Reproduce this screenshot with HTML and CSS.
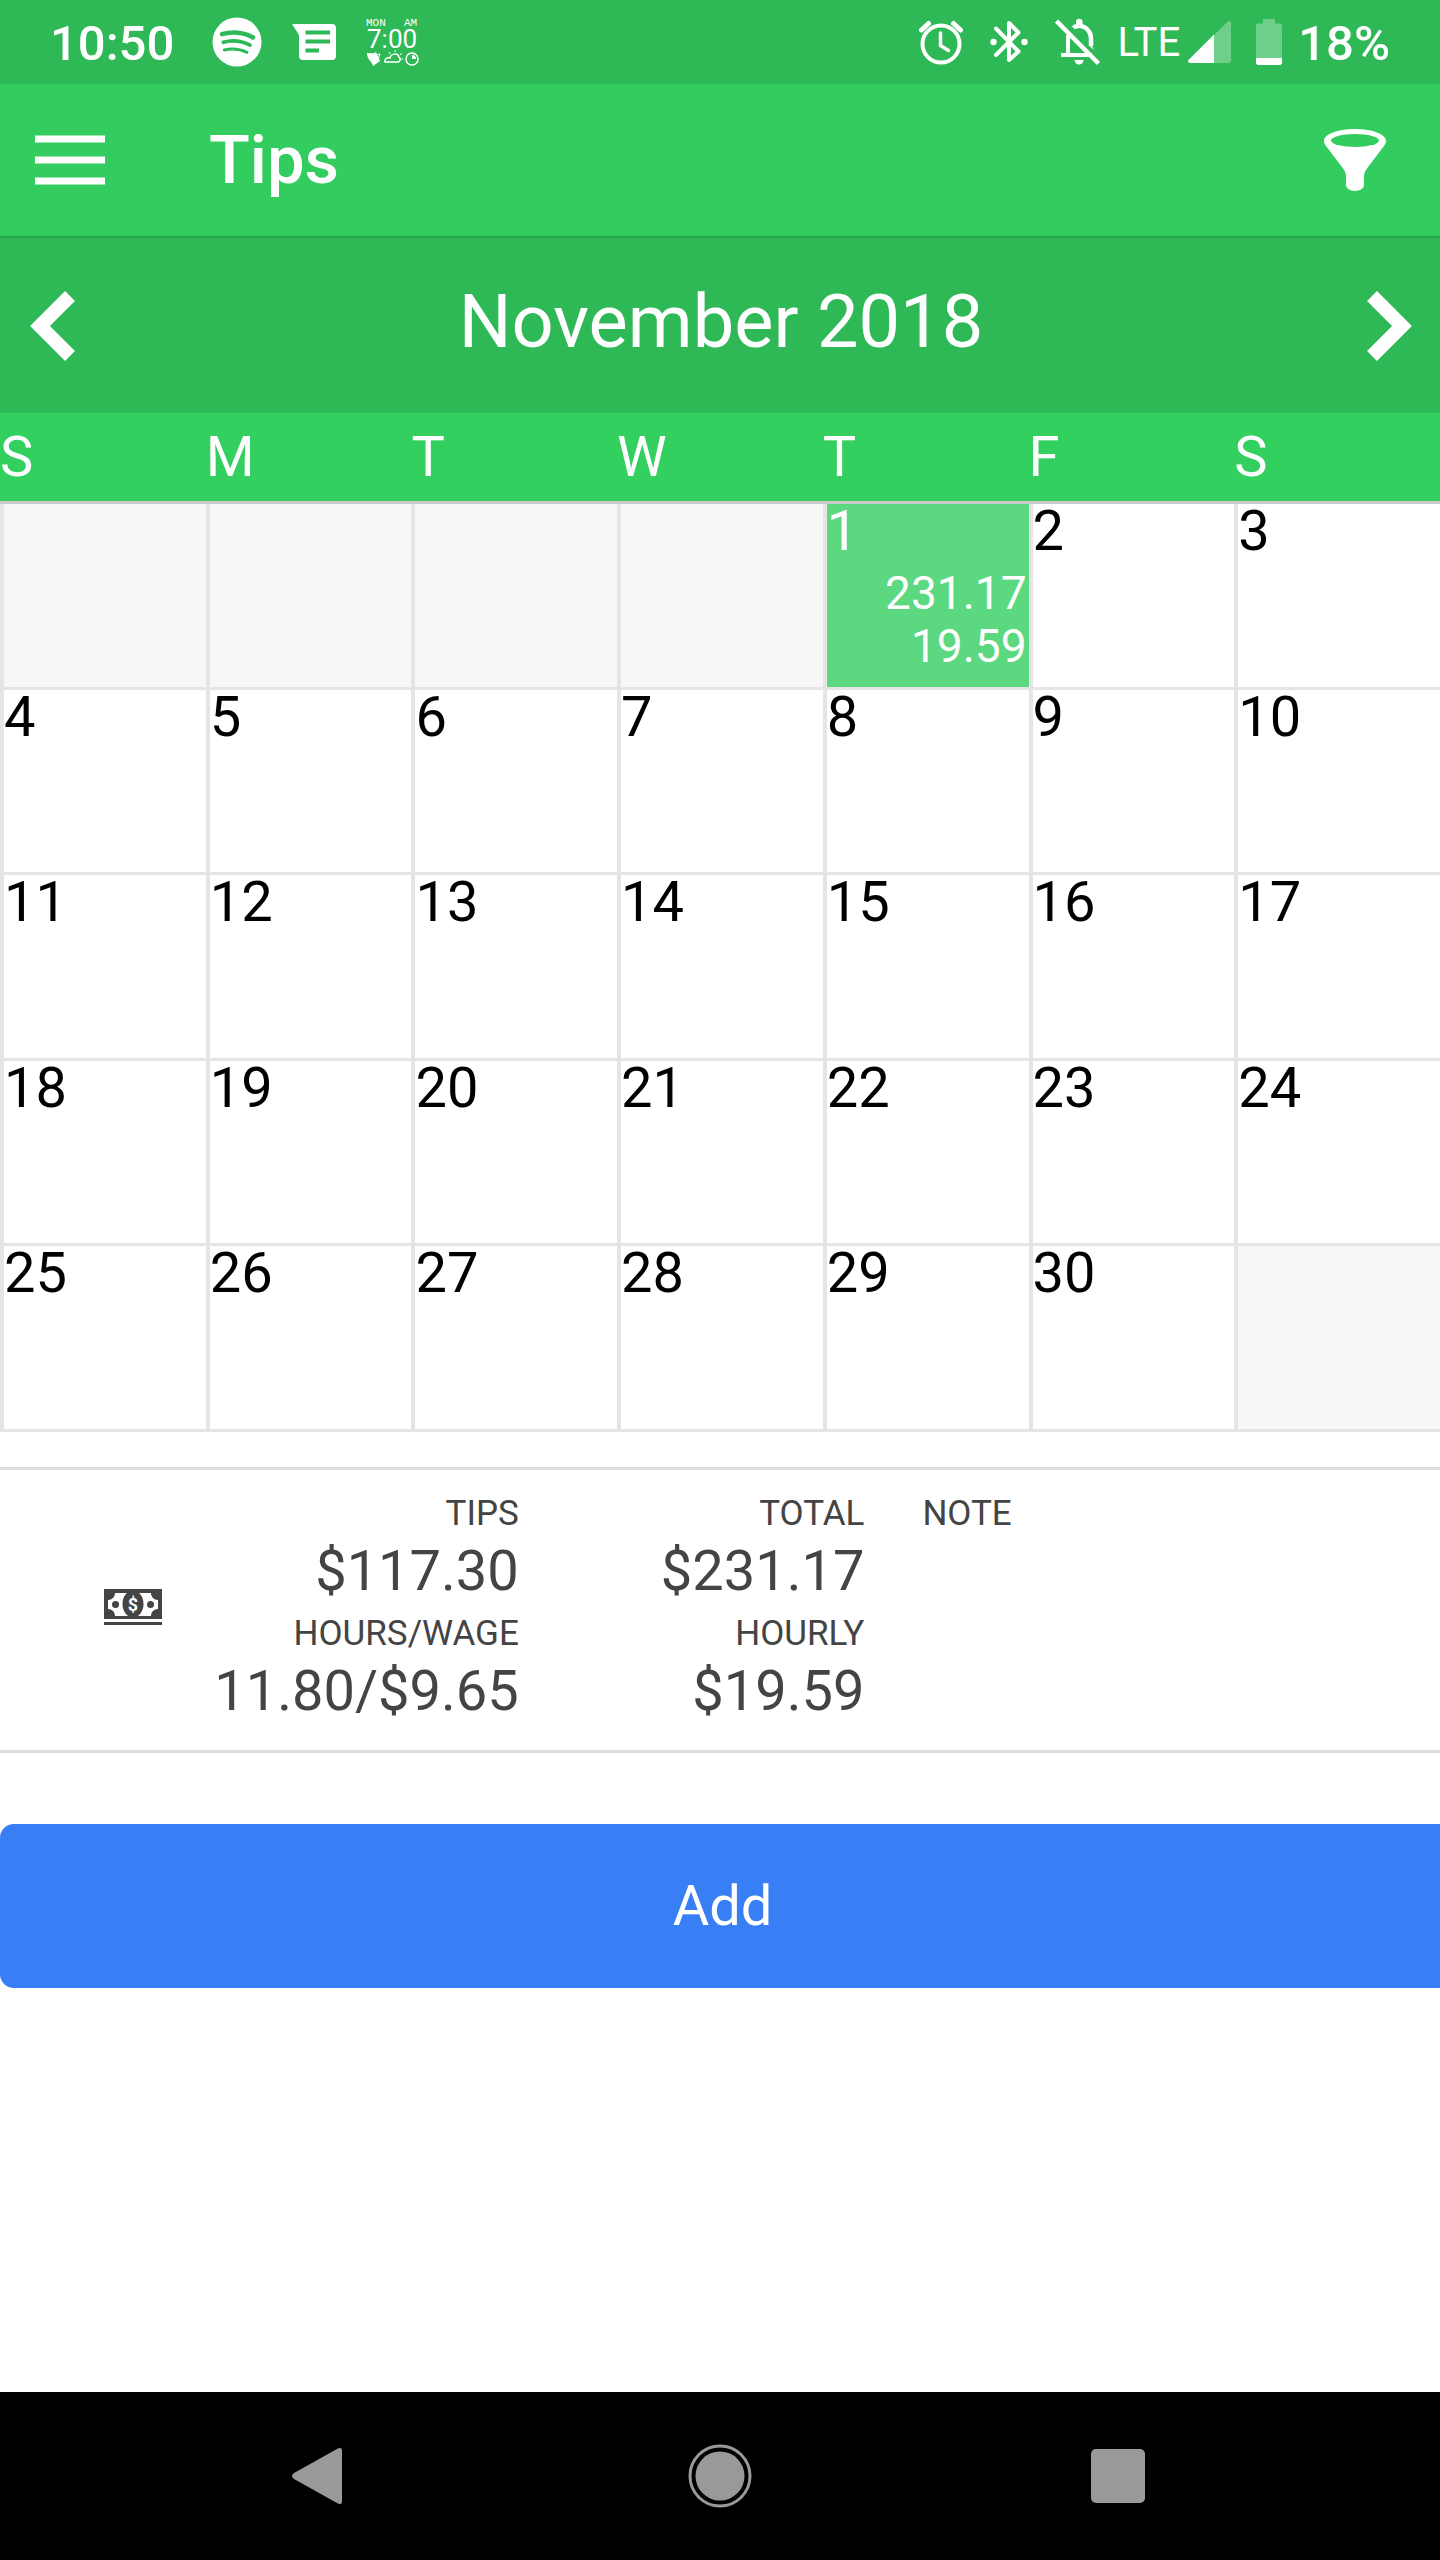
FILE: index.html
```html
<!DOCTYPE html>
<html lang="en">

<head>
    <meta charset="utf-8">
    <meta name="viewport" content="width=device-width, initial-scale=1">
    <title>Tips</title>
    <link rel="stylesheet" href="styles.css">
</head>

<body>

    <div class="status-bar">
        <div class="status-left">
            <span class="clock">10:50</span>
            <svg width="50" height="50" viewBox="0 0 50 50">
                <circle cx="25" cy="25" r="24.500" fill="#fff"/>
                <g fill="none" stroke="#2eb956" stroke-linecap="round">
                    <path d="M10 17.200c10-3 22-2 31 3.300" stroke-width="4.400"/>
                    <path d="M11.300 25.300c9-2.600 18.500-1.500 26.700 2.900" stroke-width="3.700"/>
                    <path d="M12.300 33c8-2 15.500-1.300 22.700 2.300" stroke-width="3"/>
                </g>
            </svg>
            <svg width="44" height="36" viewBox="0 0 44 36">
                <path fill="#fff" d="M0 0h40a4 4 0 0 1 4 4v28a4 4 0 0 1-4 4H11a4 4 0 0 1-4-4V11z"/>
                <path d="M13.500 8.500h24.500M13.500 17.500h24.500M13.500 26.500h13.500" stroke="#2eb956" stroke-width="4"/>
            </svg>
            <svg class="widget" width="54" height="50" viewBox="0 0 54 50">
                <text x="0" y="9" font-size="11">MON</text>
                <text x="38" y="9" font-size="11">AM</text>
                <text class="widget-time" x="1" y="31" font-size="26">7:00</text>
                <path d="M1 36c5 0 7 1 9-1l4 9-7 5c-1-5-6-6-6-13z" fill="#fff"/>
                <g fill="none" stroke="#fff">
                    <path d="M10 38l4-1-3 9"/>
                    <path d="M19 45c-1-3 2-5 5-4 1-5 8-5 9-1 2 2 1 5-1 5z" stroke-width="1.500"/>
                    <path d="M29 35v-2M34 38l2-2M34 42h3M24 37l-1-2"/>
                    <circle cx="46" cy="42" r="6" stroke-width="1.500"/>
                </g>
                <path d="M46 42v-4a4 4 0 0 1 4 4z" fill="#fff"/>
            </svg>
        </div>
        <div class="status-right">
            <svg class="gap-wide" width="44" height="46" viewBox="0 0 44 46">
                <g fill="none" stroke="#fff" stroke-width="4">
                    <circle cx="22" cy="25" r="18.500"/>
                    <path d="M2.500 11l7-6.500M41.500 11l-7-6.500" stroke-width="5" stroke-linecap="round"/>
                    <path d="M21.500 14v12.500l8 5" stroke-width="3.500" stroke-linecap="round"/>
                </g>
            </svg>
            <svg class="gap-wide" width="38" height="46" viewBox="0 0 38 46">
                <path d="M6 9.500l22.500 23L19 41V4l9.500 9.500L6 36" fill="none" stroke="#fff" stroke-width="4" stroke-linecap="round" stroke-linejoin="round"/>
                <circle cx="3.500" cy="23" r="3.200" fill="#fff"/>
                <circle cx="34.500" cy="23" r="3.200" fill="#fff"/>
            </svg>
            <svg class="gap-bell" width="46" height="48" viewBox="0 0 46 48">
                <g fill="none" stroke="#fff" stroke-width="4">
                    <path d="M1.500 3l42 42.500" stroke-width="4.500"/>
                    <path d="M13 17v21M6 37h31"/>
                    <path d="M19 9c8-4 17 2 17 12v7" stroke-width="4.500"/>
                </g>
                <path d="M21 7V4a3.200 3.200 0 0 1 6.500 0v5l-8 2-3-3zM19.500 42h9a4.500 4.500 0 0 1-9 0z" fill="#fff"/>
                <path d="M35 24l4 8-4-3.500z" fill="#fff"/>
            </svg>
            <span class="network">LTE</span>
            <svg class="gap-signal" width="43" height="42" viewBox="0 0 43 42">
                <path d="M39.500.700Q43-1 43 2v38q0 2-2 2H26V14z" fill="#6dcf89"/>
                <path d="M26 13.500V42H2.500Q-1 42 .500 39z" fill="#fff"/>
            </svg>
            <svg width="26" height="46" viewBox="0 0 26 46">
                <path d="M7 0h12v4.500h5.500L26 6v33H0V6l1.500-1.500H7z" fill="#6dcf89"/>
                <path d="M0 39h26v5.500L24.500 46h-23L0 44.500z" fill="#fff"/>
            </svg>
            <span class="battery">18%</span>
        </div>
    </div>

    <header class="app-bar">
        <button class="icon-button" aria-label="Menu">
            <svg width="70" height="50" viewBox="0 0 70 50">
                <path d="M0 4h70M0 25h70M0 46h70" stroke="#fff" stroke-width="7"/>
            </svg>
        </button>
        <h1>Tips</h1>
        <button class="icon-button" aria-label="Filter">
            <svg width="62" height="62" viewBox="0 0 62 62">
                <path d="M31 0C14 0 0 5 0 12c0 2 1 3.500 2 5l16 21c3 4 4 6 4 9v9c0 3 4 6 9 6s9-3 9-6v-9c0-3 1-5 4-9l16-21c1-1.500 2-3 2-5C62 5 48 0 31 0z" fill="#fff"/>
                <ellipse cx="31" cy="11.500" rx="24" ry="6.500" fill="#33cd5f"/>
            </svg>
        </button>
    </header>

    <main>
        <div class="month-bar">
            <button class="icon-button" aria-label="Previous month">
                <svg width="46" height="70" viewBox="0 0 46 70">
                    <path d="M40 5L10 35l30 30" fill="none" stroke="#fff" stroke-width="14"/>
                </svg>
            </button>
            <h2>November 2018</h2>
            <button class="icon-button" aria-label="Next month">
                <svg width="46" height="70" viewBox="0 0 46 70">
                    <path d="M6 5l30 30L6 65" fill="none" stroke="#fff" stroke-width="14"/>
                </svg>
            </button>
        </div>

        <table class="calendar">
            <thead>
                <tr>
                    <th>S</th>
                    <th>M</th>
                    <th>T</th>
                    <th>W</th>
                    <th>T</th>
                    <th>F</th>
                    <th>S</th>
                </tr>
            </thead>
            <tbody>
                <tr>
                    <td class="empty"></td>
                    <td class="empty"></td>
                    <td class="empty"></td>
                    <td class="empty"></td>
                    <td class="selected">
                        1
                        <div class="amounts">231.17<br>19.59</div>
                    </td>
                    <td>2</td>
                    <td>3</td>
                </tr>
                <tr>
                    <td>4</td>
                    <td>5</td>
                    <td>6</td>
                    <td>7</td>
                    <td>8</td>
                    <td>9</td>
                    <td>10</td>
                </tr>
                <tr>
                    <td>11</td>
                    <td>12</td>
                    <td>13</td>
                    <td>14</td>
                    <td>15</td>
                    <td>16</td>
                    <td>17</td>
                </tr>
                <tr>
                    <td>18</td>
                    <td>19</td>
                    <td>20</td>
                    <td>21</td>
                    <td>22</td>
                    <td>23</td>
                    <td>24</td>
                </tr>
                <tr>
                    <td>25</td>
                    <td>26</td>
                    <td>27</td>
                    <td>28</td>
                    <td>29</td>
                    <td>30</td>
                    <td class="empty"></td>
                </tr>
            </tbody>
        </table>

        <section class="entry">
            <div class="entry-icon">
                <svg width="58" height="36" viewBox="0 0 58 36">
                    <path d="M0 0h58v30H0zM0 33h58v3H0z" fill="#444"/>
                    <path d="M11 4h36c0 4 3 7 7 7v9c-4 0-7 3-7 7H11c0-4-3-7-7-7v-9c4 0 7-3 7-7z" fill="#fff"/>
                    <ellipse cx="29" cy="15" rx="10.500" ry="13.500" fill="#444"/>
                    <circle cx="11.500" cy="15.500" r="3.500" fill="#444"/>
                    <circle cx="46.500" cy="15.500" r="3.500" fill="#444"/>
                    <text x="29" y="21.500" font-size="18" font-weight="bold" text-anchor="middle" fill="#fff">$</text>
                </svg>
            </div>
            <dl>
                <dt>TIPS</dt>
                <dd>$117.30</dd>
                <dt>HOURS/WAGE</dt>
                <dd>11.80/$9.65</dd>
            </dl>
            <dl>
                <dt>TOTAL</dt>
                <dd>$231.17</dd>
                <dt>HOURLY</dt>
                <dd>$19.59</dd>
            </dl>
            <dl class="note">
                <dt>NOTE</dt>
            </dl>
        </section>

        <button class="add-button">Add</button>
    </main>

    <nav class="nav-bar">
        <button class="icon-button" aria-label="Back">
            <svg width="64" height="64" viewBox="0 0 64 64">
                <path d="M4 29L47 5q5-3 5 2v50q0 5-5 2L4 35q-4-3 0-6z" fill="#999"/>
            </svg>
        </button>
        <button class="icon-button" aria-label="Home">
            <svg width="64" height="64" viewBox="0 0 64 64">
                <circle cx="32" cy="32" r="30" fill="none" stroke="#999" stroke-width="3"/>
                <circle cx="32" cy="32" r="24.500" fill="#999"/>
            </svg>
        </button>
        <button class="icon-button" aria-label="Recent apps">
            <svg width="64" height="64" viewBox="0 0 64 64">
                <rect x="5" y="5" width="54" height="54" rx="5" fill="#999"/>
            </svg>
        </button>
    </nav>

</body>

</html>
```

FILE: styles.css
```css
* {
    box-sizing: border-box;
}

body {
    display: flex;
    flex-direction: column;
    min-height: 100vh;
    margin: 0;
    background: #fff;
    color: #000;
    font-family: Roboto, "Liberation Sans", sans-serif;
    font-size: 56px;
    overflow-x: hidden;
}

h1,
h2 {
    margin: 0;
    color: #fff;
}

svg {
    display: block;
    flex: none;
}

.icon-button {
    padding: 0;
    border: none;
    background: none;
    cursor: pointer;
}

/* status bar */
.status-bar {
    display: flex;
    justify-content: space-between;
    height: 84px;
    padding: 0 50px;
    background: #2eb956;
    color: #fff;
}

.status-left,
.status-right {
    display: flex;
    align-items: center;
}

.status-left {
    gap: 30px;
}

.clock,
.battery {
    padding-top: 2px;
    font-size: 49px;
    font-weight: 500;
}

.clock {
    margin-right: 8px;
}

.battery {
    margin-left: 16px;
}

.network {
    margin-right: 8px;
    font-size: 40px;
}

.gap-wide {
    margin-right: 27px;
}

.gap-bell {
    margin-right: 16px;
}

.gap-signal {
    margin-right: 25px;
}

.widget text {
    fill: #fff;
    font-family: "Liberation Mono", monospace;
}

.widget .widget-time {
    font-family: Roboto, sans-serif;
}

/* title bar */
.app-bar {
    display: flex;
    align-items: center;
    height: 154px;
    padding: 0 54px 0 35px;
    background: #33cd5f;
    border-bottom: 2px solid #28a54c;
}

.app-bar h1 {
    flex: 1;
    margin-left: 104px;
    font-size: 67px;
    font-weight: 500;
}

/* calendar */
.month-bar {
    display: flex;
    align-items: center;
    justify-content: space-between;
    height: 175px;
    padding: 0 28px 0 30px;
    background: #2eb956;
}

.month-bar h2 {
    padding-bottom: 8px;
    font-size: 74px;
    font-weight: 400;
}

.calendar {
    width: 100%;
    height: 1019px;
    table-layout: fixed;
    border-spacing: 0;
}

.calendar th {
    height: 91px;
    padding: 0;
    background: #33cf5f;
    border-bottom: 3px solid #ccc;
    color: #fff;
    font-weight: 400;
    text-align: left;
}

.calendar td {
    height: 185px;
    padding: 0 2px 0 0;
    border-left: 4px solid #e5e5e5;
    border-bottom: 3px solid #e5e5e5;
    line-height: 54px;
    vertical-align: top;
}

.calendar .empty {
    background: #f7f7f7;
}

.calendar .selected {
    background: #5cd980;
    color: #fff;
}

.amounts {
    margin-top: 9px;
    font-size: 46px;
    line-height: 53px;
    text-align: right;
}

/* tip entry */
.entry {
    display: grid;
    grid-template-columns: 13% 24% 24% 1fr;
    margin-top: 35px;
    padding: 23px 0;
    border-top: 3px solid #ddd;
    border-bottom: 3px solid #ddd;
    color: #444;
}

.entry-icon {
    display: flex;
    align-items: center;
    justify-content: flex-end;
    padding: 0 25px 6px 0;
}

.entry dl {
    margin: 0;
    padding-right: 14px;
    text-align: right;
}

.entry dt {
    font-size: 35px;
    line-height: 42px;
}

.entry dd {
    margin: 0;
    line-height: 72px;
}

.entry dd + dt {
    margin-top: 6px;
}

.entry .note {
    padding-left: 44px;
    text-align: left;
}

.add-button {
    display: block;
    width: 100%;
    height: 164px;
    margin: 71px 0;
    padding: 0 0 0 5px;
    border: none;
    border-radius: 14px 0 0 14px;
    background: #387ef5;
    color: #fff;
    font-family: inherit;
    font-size: 56px;
    cursor: pointer;
}

/* system navigation */
.nav-bar {
    display: flex;
    align-items: center;
    justify-content: space-between;
    height: 168px;
    margin-top: auto;
    padding: 0 290px;
    background: #000;
}
```
